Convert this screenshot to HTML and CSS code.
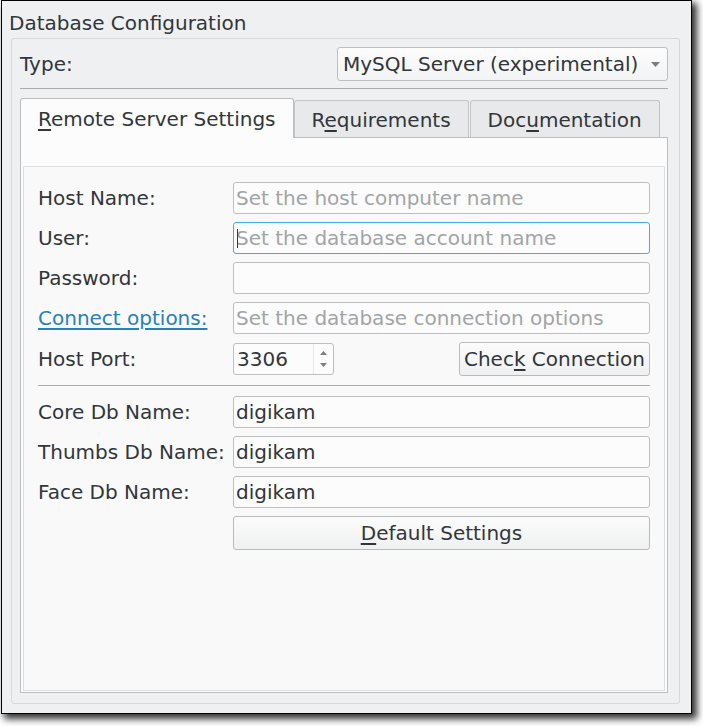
FILE: index.html
```html
<!DOCTYPE html>
<html>
<head>
<meta charset="utf-8">
<link rel="stylesheet" href="styles.css">
</head>
<body>
<div class="window">
  <div class="group-title">Database Configuration</div>
  <div class="group">
    <div class="type-row">
      <span class="label">Type:</span>
      <div class="combo">
        <span>MySQL Server (experimental)</span>
        <svg class="combo-arrow" width="9" height="5" viewBox="0 0 9 5"><path d="M0 0 L9 0 L4.5 5 Z" fill="#7a7d80"/></svg>
      </div>
    </div>
    <div class="hline"></div>
    <div class="tabs">
      <div class="tab active"><u>R</u>emote Server Settings</div>
      <div class="tab">R<u>e</u>quirements</div>
      <div class="tab">Doc<u>u</u>mentation</div>
    </div>
    <div class="pane">
      <div class="inner">
        <div class="row"><span class="label">Host Name:</span><div class="field placeholder">Set the host computer name</div></div>
        <div class="row"><span class="label">User:</span><div class="field focus placeholder"><span class="caret"></span>Set the database account name</div></div>
        <div class="row"><span class="label">Password:</span><div class="field"></div></div>
        <div class="row"><span class="label link">Connect options:</span><div class="field placeholder">Set the database connection options</div></div>
        <div class="row port-row">
          <span class="label">Host Port:</span>
          <div class="port-cell">
            <div class="spin">
              <span class="spin-value">3306</span>
              <div class="spin-arrows">
                <svg width="7" height="4" viewBox="0 0 7 4"><path d="M0 4 L7 4 L3.5 0 Z" fill="#7a7d80"/></svg>
                <svg width="7" height="4" viewBox="0 0 7 4"><path d="M0 0 L7 0 L3.5 4 Z" fill="#7a7d80"/></svg>
              </div>
            </div>
            <div class="button check">Chec<u>k</u> Connection</div>
          </div>
        </div>
        <div class="sep"></div>
        <div class="row"><span class="label">Core Db Name:</span><div class="field">digikam</div></div>
        <div class="row"><span class="label">Thumbs Db Name:</span><div class="field">digikam</div></div>
        <div class="row"><span class="label">Face Db Name:</span><div class="field">digikam</div></div>
        <div class="row btn-row"><span></span><div class="button wide"><u>D</u>efault Settings</div></div>
      </div>
    </div>
  </div>
</div>
</body>
</html>
```

FILE: styles.css
```css
* { box-sizing: border-box; }
html, body {
  margin: 0;
  padding: 0;
  background: #ffffff;
}
body {
  font-family: "DejaVu Sans", "Liberation Sans", sans-serif;
  font-size: 20px;
  color: #31363b;
  width: 703px;
  height: 726px;
  overflow: hidden;
}
.window {
  margin-left: 1px;
  width: 691px;
  height: 714px;
  border: 1px solid #000;
  background: #eff0f1;
  box-shadow: 4px 4px 7px 1px rgba(0,0,0,0.8);
  display: flex;
  flex-direction: column;
  padding-top: 10px;
}
.group-title {
  line-height: 24px;
  height: 24px;
  padding-left: 7px;
  white-space: nowrap;
}
.group {
  flex: 1;
  margin: 3px 11px 9px 9px;
  border: 1px solid #d6d8da;
  border-radius: 3px;
  padding: 8px 11px 10px 8px;
  display: flex;
  flex-direction: column;
}
.type-row {
  height: 34px;
  display: flex;
  align-items: center;
  justify-content: space-between;
}
.label { white-space: nowrap; line-height: 24px; }
.combo {
  width: 331px;
  height: 34px;
  border: 1px solid #bcbec0;
  border-radius: 3px;
  background: linear-gradient(#fcfcfc, #f2f3f4);
  display: flex;
  align-items: center;
  justify-content: space-between;
  padding: 0 6px 0 5px;
  white-space: nowrap;
}
.combo-arrow { margin-right: 1px; }
.hline {
  margin-top: 7px;
  height: 1px;
  background: #a9abad;
}
.tabs {
  margin-top: 9px;
  height: 39px;
  display: flex;
  align-items: flex-end;
}
.tab {
  height: 37px;
  border: 1px solid #c2c4c6;
  border-bottom: none;
  border-radius: 3px 3px 0 0;
  background: #e8e9ea;
  padding: 0 17px;
  line-height: 38px;
  white-space: nowrap;
}
.tab:last-child { margin-left: 1px; }
.tab.active {
  height: 40px;
  background: #fcfcfc;
  border-color: #bcbec0;
  line-height: 40px;
  margin-bottom: -1px;
  position: relative;
  z-index: 1;
}
.pane {
  flex: 1;
  border: 1px solid #bcbec0;
  background: #fcfcfc;
  padding: 28px 2px 1px 2px;
  display: flex;
  flex-direction: column;
}
.inner {
  flex: 1;
  border: 1px solid #dcdedf;
  background: #f9f9f9;
  padding: 15px 14px 0 14px;
  display: flex;
  flex-direction: column;
}
.row {
  display: grid;
  grid-template-columns: 195px 1fr;
  align-items: center;
  height: 32px;
  margin-bottom: 8px;
}
.field {
  height: 32px;
  border: 1px solid #bcbec0;
  border-radius: 3px;
  background: #fcfcfc;
  padding-left: 2px;
  line-height: 30px;
  white-space: nowrap;
  overflow: hidden;
  position: relative;
}
.field.placeholder { color: #a2a5a7; }
.field.focus { border-color: #3daee9; }
.caret {
  position: absolute;
  left: 3px;
  top: 6px;
  width: 1px;
  height: 19px;
  background: #31363b;
}
.link {
  color: #2980b9;
  text-decoration: underline;
  text-underline-offset: 3px;
}
.port-row { height: 34px; margin-bottom: 9px; }
.port-cell {
  display: flex;
  align-items: center;
  justify-content: space-between;
  height: 34px;
}
.spin {
  width: 101px;
  height: 32px;
  border: 1px solid #bcbec0;
  border-radius: 3px;
  background: #fcfcfc;
  display: flex;
  align-items: center;
  justify-content: space-between;
}
.spin-value { padding-left: 3px; line-height: 30px; }
.spin-arrows {
  width: 20px;
  height: 30px;
  border-left: 1px solid #e6e7e8;
  display: flex;
  flex-direction: column;
  align-items: center;
  justify-content: center;
  gap: 8px;
}
.spin-arrows svg { display: block; }
.button {
  height: 34px;
  border: 1px solid #b8babc;
  border-radius: 3px;
  background: linear-gradient(#fcfcfc, #eff0f1);
  line-height: 32px;
  text-align: center;
  white-space: nowrap;
}
.check { width: 191px; }
.sep {
  height: 1px;
  background: #a9abad;
  margin: 0 0 10px 0;
}
.btn-row { height: 34px; }
u { text-decoration: underline; text-underline-offset: 3px; }
```
